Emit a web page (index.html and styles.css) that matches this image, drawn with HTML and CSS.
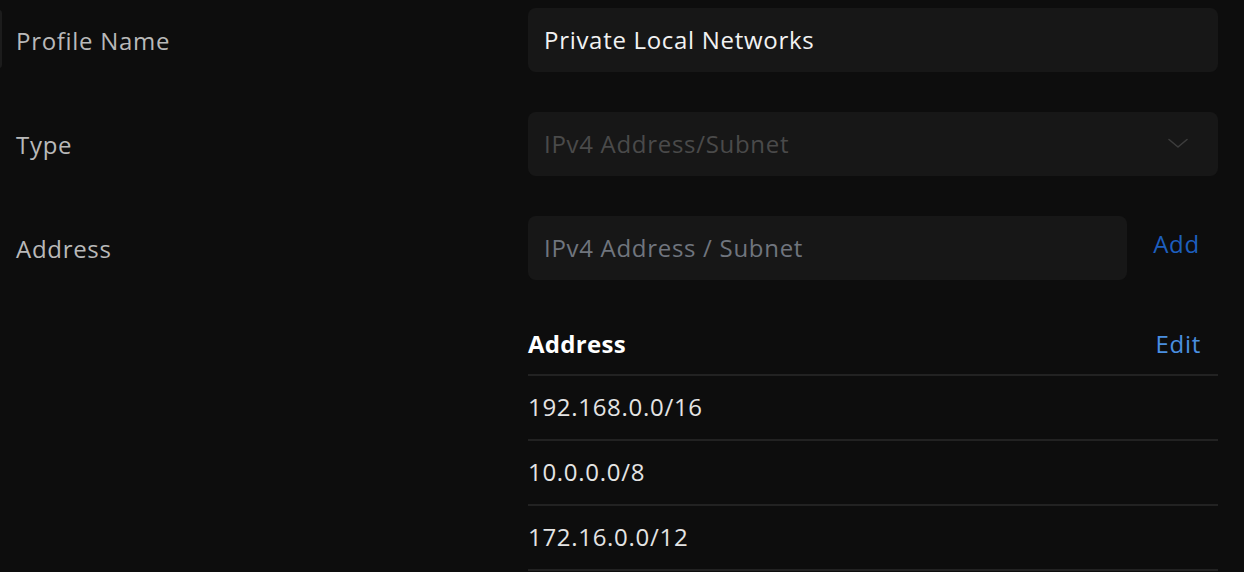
FILE: index.html
```html
<!DOCTYPE html>
<html>
<head>
<meta charset="utf-8">
<link rel="stylesheet" href="styles.css">
</head>
<body>
<div class="page">
  <div class="edge"></div>
  <div class="form">
    <div class="row">
      <div class="label">Profile Name</div>
      <div class="field"><div class="input value">Private Local Networks</div></div>
    </div>
    <div class="row">
      <div class="label">Type</div>
      <div class="field">
        <div class="input select disabled">
          <span>IPv4 Address/Subnet</span>
          <svg class="chev" width="20" height="11" viewBox="0 0 20 11"><path d="M1 1.5 L10 9 L19 1.5" fill="none" stroke="#3c3c3c" stroke-width="1.6" stroke-linecap="round" stroke-linejoin="round"/></svg>
        </div>
      </div>
    </div>
    <div class="row">
      <div class="label">Address</div>
      <div class="field split">
        <div class="input placeholder">IPv4 Address / Subnet</div>
        <div class="add">Add</div>
      </div>
    </div>
    <div class="table-wrap">
      <div class="table">
        <div class="thead"><span class="th">Address</span><span class="edit">Edit</span></div>
        <div class="tr">192.168.0.0/16</div>
        <div class="tr">10.0.0.0/8</div>
        <div class="tr">172.16.0.0/12</div>
      </div>
    </div>
  </div>
</div>
</body>
</html>
```
FILE: styles.css
```css
html, body {
  margin: 0;
  padding: 0;
  background: #0d0d0d;
  height: 100%;
  overflow: hidden;
}
body {
  font-family: "Open Sans", "Noto Sans", sans-serif;
  font-size: 24px;
  letter-spacing: 0.7px;
  color: #e8e8e8;
}
.page {
  display: flex;
  align-items: flex-start;
}
.edge {
  width: 3px;
  height: 58px;
  margin-top: 10px;
  margin-left: -1px;
  background: #1c1c1c;
  border-radius: 0 3px 3px 0;
  flex: none;
}
.form {
  flex: 1;
  padding-top: 8px;
  display: flex;
  flex-direction: column;
  gap: 40px;
}
.row {
  display: grid;
  grid-template-columns: 526px 690px;
  align-items: center;
}
.label {
  padding-left: 14px;
  color: #b9b9b9;
}
.field.split {
  display: flex;
  align-items: center;
}
.input {
  height: 64px;
  box-sizing: border-box;
  border-radius: 8px;
  background: #171717;
  padding: 0 16px 2px;
  display: flex;
  align-items: center;
}
.value { color: #f2f2f2; }
.select { justify-content: space-between; padding-right: 30px; }
.disabled { color: #4a4a4a; }
.chev { margin-top: 1px; }
.split .input { width: 599px; }
.placeholder { color: #70757e; }
.add {
  flex: 1;
  text-align: center;
  color: #1d5ebe;
  padding-left: 8px;
  margin-top: -10px;
}
.table-wrap {
  display: grid;
  grid-template-columns: 526px 690px;
  margin-top: -8px;
}
.table { grid-column: 2; }
.thead, .tr {
  height: 64px;
  display: flex;
  align-items: center;
  border-bottom: 2px solid #222222;
  box-sizing: border-box;
}
.tr { height: 65px; color: #e4e4e4; padding-bottom: 2px; }
.thead { justify-content: space-between; padding-right: 17px; }
.th { font-weight: 700; color: #ffffff; letter-spacing: 0.3px; }
.edit { color: #4a8fe0; }
```
